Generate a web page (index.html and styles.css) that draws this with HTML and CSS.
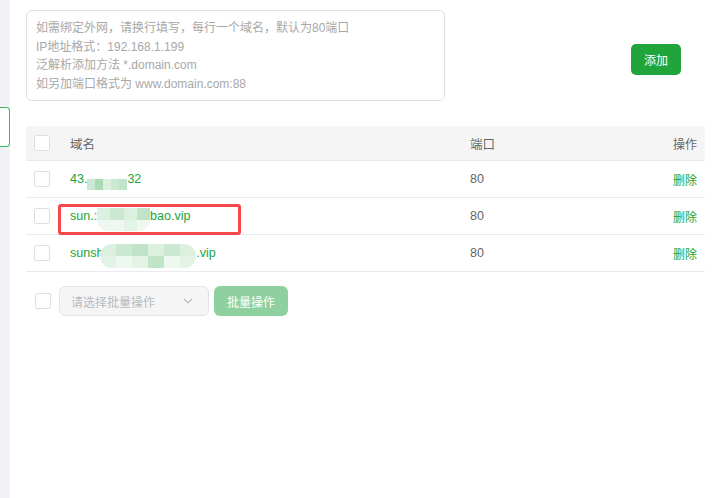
FILE: index.html
```html
<!DOCTYPE html>
<html>
<head>
<meta charset="utf-8">
<link rel="stylesheet" href="styles.css">
</head>
<body>
<div class="page">
  <aside class="side">
    <div class="side-tab"></div>
  </aside>
  <main class="main">
    <div class="top">
      <div class="textarea">
        <div>如需绑定外网，请换行填写，每行一个域名，默认为80端口</div>
        <div>IP地址格式：192.168.1.199</div>
        <div>泛解析添加方法 *.domain.com</div>
        <div>如另加端口格式为 www.domain.com:88</div>
      </div>
      <button class="btn-add">添加</button>
    </div>

    <div class="table">
      <div class="tr th">
        <div class="c-check"><span class="cb"></span></div>
        <div class="c-name">域名</div>
        <div class="c-port">端口</div>
        <div class="c-op">操作</div>
      </div>
      <div class="tr">
        <div class="c-check"><span class="cb"></span></div>
        <div class="c-name link">43.<span class="blur b1"><i class="g2"></i><i class="g1"></i><i class="g3"></i><i class="g2"></i><i class="g4"></i></span>32</div>
        <div class="c-port">80</div>
        <div class="c-op link">删除</div>
      </div>
      <div class="tr">
        <div class="c-check"><span class="cb"></span></div>
        <div class="c-name link">sun.:<span class="blur b2"><i class="g3"></i><i class="g2"></i><i class="g3"></i><i class="g4"></i><i class="g5"></i><i class="g5"></i><i class="g6"></i><i class="g5"></i></span>bao.vip</div>
        <div class="c-port">80</div>
        <div class="c-op link">删除</div>
        <div class="highlight"></div>
      </div>
      <div class="tr">
        <div class="c-check"><span class="cb"></span></div>
        <div class="c-name link">sunsh<span class="blur b3"><i class="g3"></i><i class="g2"></i><i class="g4"></i><i class="g3"></i><i class="g2"></i><i class="g3"></i><i class="g6"></i><i class="g5"></i><i class="g6"></i><i class="g4"></i><i class="g5"></i><i class="g6"></i></span>.vip</div>
        <div class="c-port">80</div>
        <div class="c-op link">删除</div>
      </div>
    </div>

    <div class="batch">
      <span class="cb"></span>
      <div class="select">
        <span>请选择批量操作</span>
        <svg width="12" height="8" viewBox="0 0 12 8"><path d="M2 2 L6 6 L10 2" fill="none" stroke="#b8bcc4" stroke-width="1.2"/></svg>
      </div>
      <button class="btn-batch">批量操作</button>
    </div>
  </main>
</div>
</body>
</html>
```
FILE: styles.css
```css
* { box-sizing: border-box; }
html, body { margin: 0; padding: 0; background: #fff; }
body {
  font-family: "Liberation Sans", "Noto Sans CJK SC", sans-serif;
  font-size: 12px;
  color: #666;
}
.page { display: flex; min-height: 498px; }
.side {
  width: 10px;
  flex: none;
  background: #f0f2f5;
  padding-top: 107px;
  overflow: hidden;
}
.side-tab {
  width: 10px;
  height: 40px;
  background: #fff;
  border: 1.5px solid #3cb95a;
  border-left: none;
  border-radius: 0 4px 4px 0;
}
.main {
  padding: 10px 0 0 16px;
  width: 695px;
}
.top { display: flex; align-items: flex-start; }
.textarea {
  width: 419px;
  height: 91px;
  border: 1px solid #dcdfe6;
  border-radius: 6px;
  padding: 8px 9px;
  line-height: 18.5px;
  font-size: 12px;
  color: #a8a8a8;
}
.btn-add {
  margin: 34px 0 0 186px;
  width: 50px;
  height: 31px;
  border: none;
  border-radius: 5px;
  background: #20a53a;
  color: #fff;
  font: inherit;
  font-size: 12px;
  padding: 0;
}
.table { width: 679px; margin-top: 25px; }
.tr {
  position: relative;
  display: flex;
  align-items: center;
  height: 37px;
  border-bottom: 1px solid #e9e9f0;
}
.th { height: 35px; background: #f5f5f5; border-bottom: 1px solid #ebebeb; }
.c-check { width: 44px; padding-left: 8px; display: flex; }
.c-name { width: 400px; white-space: nowrap; display: flex; align-items: center; font-size: 12.5px; }
.c-port { flex: 1; font-size: 12.5px; }
.c-op { padding-right: 8px; }
.link { color: #20a53a; }
.cb {
  display: inline-block;
  width: 16px;
  height: 16px;
  border: 1px solid #dcdfe6;
  border-radius: 2px;
  background: #fff;
}
.blur { display: inline-flex; flex-wrap: wrap; align-self: flex-start; }
.blur i { display: block; height: 11px; }
.b1 { width: 40px; margin-top: 10px; }
.b1 i { width: 8px; }
.b2 { width: 53px; height: 23px; margin-top: 7px; border-radius: 0 0 12px 12px; overflow: hidden; background: #f2faf3; }
.b2 i { width: 13.25px; height: 11.5px; }
.b3 { width: 96px; height: 24px; margin-top: 6px; margin-left: -3px; border-radius: 12px; overflow: hidden; background: #eef8f0; }
.b3 i { width: 16px; height: 12px; }
.g1 { background: #a9dbb4; }
.g2 { background: #cbe9d2; }
.g3 { background: #dbf0df; }
.g4 { background: #bfe4c7; }
.g5 { background: #eef8f0; }
.g6 { background: #e3f3e6; }
.highlight {
  position: absolute;
  left: 32px;
  top: 6px;
  width: 183px;
  height: 31px;
  border: 3px solid #f5474c;
  border-radius: 3px;
}
.batch {
  display: flex;
  align-items: center;
  margin-top: 14px;
  padding-left: 9px;
}
.select {
  margin-left: 8px;
  width: 150px;
  height: 30px;
  background: #f5f5f6;
  border: 1px solid #e3e4ea;
  border-radius: 6px;
  display: flex;
  align-items: center;
  justify-content: space-between;
  padding: 0 14px 0 11px;
  color: #b8bac0;
}
.btn-batch {
  margin-left: 5px;
  width: 74px;
  height: 30px;
  border: none;
  border-radius: 6px;
  background: #8fd19e;
  color: #fff;
  font: inherit;
  font-size: 12px;
  padding: 0;
}
```
